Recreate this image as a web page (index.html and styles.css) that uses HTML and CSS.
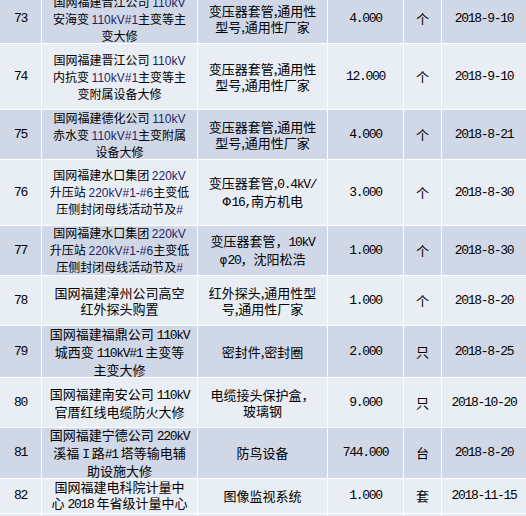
FILE: index.html
```html
<!DOCTYPE html>
<html lang="zh-CN">
<head>
<meta charset="utf-8">
<title>设备清单</title>
<link rel="stylesheet" href="styles.css">
</head>
<body>
<div class="sheet">
  <div class="row dark">
    <div class="c m"><p>73</p></div>
    <div class="c s"><p>国网福建晋江公司 <span class="en">110kV</span><br>安海变 <span class="en">110kV#1</span>主变等主<br>变大修</p></div>
    <div class="c"><p>变压器套管,通用性<br>型号,通用性厂家</p></div>
    <div class="c m"><p>4.000</p></div>
    <div class="c"><p>个</p></div>
    <div class="c m"><p>2018-9-10</p></div>
  </div>
  <div class="row light">
    <div class="c m"><p>74</p></div>
    <div class="c s"><p>国网福建晋江公司 <span class="en">110kV</span><br>内抗变 <span class="en">110kV#1</span>主变等主<br>变附属设备大修</p></div>
    <div class="c"><p>变压器套管,通用性<br>型号,通用性厂家</p></div>
    <div class="c m"><p>12.000</p></div>
    <div class="c"><p>个</p></div>
    <div class="c m"><p>2018-9-10</p></div>
  </div>
  <div class="row dark">
    <div class="c m"><p>75</p></div>
    <div class="c s"><p>国网福建德化公司 <span class="en">110kV</span><br>赤水变 <span class="en">110kV#1</span>主变附属<br>设备大修</p></div>
    <div class="c"><p>变压器套管,通用性<br>型号,通用性厂家</p></div>
    <div class="c m"><p>4.000</p></div>
    <div class="c"><p>个</p></div>
    <div class="c m"><p>2018-8-21</p></div>
  </div>
  <div class="row light">
    <div class="c m"><p>76</p></div>
    <div class="c s"><p>国网福建水口集团 <span class="en">220kV</span><br>升压站 <span class="en">220kV#1-#6</span>主变低<br>压侧封闭母线活动节及<span class="en">#</span></p></div>
    <div class="c"><p>变压器套管,<span class="m">0.4kV/</span><br><span class="phi">Φ</span><span class="m">16,</span>南方机电</p></div>
    <div class="c m"><p>3.000</p></div>
    <div class="c"><p>个</p></div>
    <div class="c m"><p>2018-8-30</p></div>
  </div>
  <div class="row dark">
    <div class="c m"><p>77</p></div>
    <div class="c s"><p>国网福建水口集团 <span class="en">220kV</span><br>升压站 <span class="en">220kV#1-#6</span>主变低<br>压侧封闭母线活动节及<span class="en">#</span></p></div>
    <div class="c"><p>变压器套管，<span class="m">10kV</span><br><span class="phi">φ</span><span class="m">20</span>，沈阳松浩</p></div>
    <div class="c m"><p>1.000</p></div>
    <div class="c"><p>个</p></div>
    <div class="c m"><p>2018-8-30</p></div>
  </div>
  <div class="row light">
    <div class="c m"><p>78</p></div>
    <div class="c"><p>国网福建漳州公司高空<br>红外探头购置</p></div>
    <div class="c"><p>红外探头,通用性型<br>号,通用性厂家</p></div>
    <div class="c m"><p>1.000</p></div>
    <div class="c"><p>个</p></div>
    <div class="c m"><p>2018-8-20</p></div>
  </div>
  <div class="row dark">
    <div class="c m"><p>79</p></div>
    <div class="c"><p>国网福建福鼎公司 <span class="m">110kV</span><br>城西变 <span class="m">110kV#1</span> 主变等<br>主变大修</p></div>
    <div class="c"><p>密封件,密封圈</p></div>
    <div class="c m"><p>2.000</p></div>
    <div class="c"><p>只</p></div>
    <div class="c m"><p>2018-8-25</p></div>
  </div>
  <div class="row light">
    <div class="c m"><p>80</p></div>
    <div class="c"><p>国网福建南安公司 <span class="m">110kV</span><br>官厝红线电缆防火大修</p></div>
    <div class="c"><p>电缆接头保护盒，<br>玻璃钢</p></div>
    <div class="c m"><p>9.000</p></div>
    <div class="c"><p>只</p></div>
    <div class="c m"><p>2018-10-20</p></div>
  </div>
  <div class="row dark">
    <div class="c m"><p>81</p></div>
    <div class="c"><p>国网福建宁德公司 <span class="m">220kV</span><br>溪福 <span class="m">I</span> 路<span class="m">#1</span> 塔等输电辅<br>助设施大修</p></div>
    <div class="c"><p>防鸟设备</p></div>
    <div class="c m"><p>744.000</p></div>
    <div class="c"><p>台</p></div>
    <div class="c m"><p>2018-8-20</p></div>
  </div>
  <div class="row light">
    <div class="c m"><p>82</p></div>
    <div class="c"><p>国网福建电科院计量中<br>心 <span class="m">2018</span> 年省级计量中心</p></div>
    <div class="c"><p>图像监视系统</p></div>
    <div class="c m"><p>1.000</p></div>
    <div class="c"><p>套</p></div>
    <div class="c m"><p>2018-11-15</p></div>
  </div>
  <div class="row light">
    <div class="c"></div>
    <div class="c"></div>
    <div class="c"></div>
    <div class="c"></div>
    <div class="c"></div>
    <div class="c"></div>
  </div>
</div>
</body>
</html>
```
FILE: styles.css
```css
html, body {
  margin: 0;
  padding: 0;
  background: #E9EDF4;
  overflow: hidden;
}

body {
  font-family: "Noto Sans CJK SC", "Noto Sans", sans-serif;
  color: #000;
}

.sheet {
  display: grid;
  grid-template-columns: 41px 155px 129px 75px 37px 84px;
  grid-template-rows: 49px 65px 49px 65px 49px 49px 51px 49px 50px 34px 20px;
  gap: 1px;
  background: #ffffff;
  margin-top: -6px;
  width: 526px;
}

.row {
  display: contents;
}

.c {
  display: flex;
  align-items: center;
  justify-content: center;
  text-align: center;
  font-size: 13px;
  line-height: 16px;
  white-space: nowrap;
  overflow: hidden;
}

.c p {
  margin: 0;
}

.dark > .c {
  background: #D0D8E8;
}

.light > .c {
  background: #E9EDF4;
}

.s {
  font-size: 12px;
}

.en {
  font-family: "Liberation Sans", Arial, sans-serif;
  font-size: 12px;
  color: #1F1F66;
}

.m {
  font-family: "Liberation Mono", monospace;
  letter-spacing: -1.3px;
}

.phi {
  font-family: "DejaVu Sans", sans-serif;
  font-size: 12px;
}
```
